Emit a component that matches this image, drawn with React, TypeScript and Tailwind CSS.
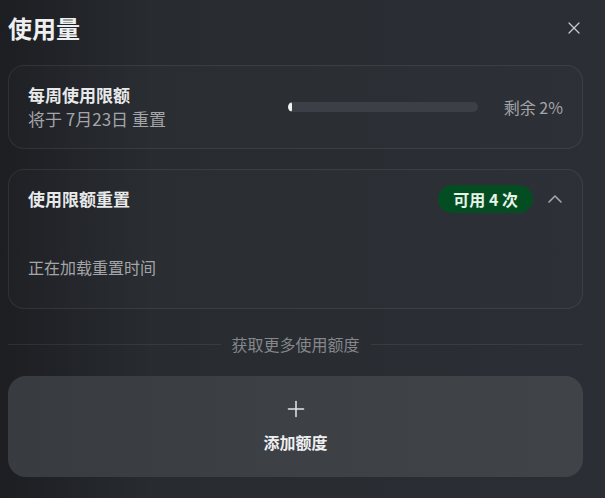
import { ChevronUp, Plus, X } from "lucide-react"

const font = { fontFamily: "'Noto Sans CJK SC', 'Noto Sans', sans-serif" }

function WeeklyLimit() {
  const remaining = 2

  return (
    <div className="flex items-center justify-between rounded-2xl border border-white/[0.07] bg-white/[0.012] pl-[19px] pr-[19px] pt-[17px] pb-[17px]">
      <div className="flex flex-col">
        <span className="text-[17px] leading-6 font-bold text-[#e8e9ea]">每周使用限额</span>
        <span className="text-[17px] leading-6 text-[#a3a5a8]">将于 7月23日 重置</span>
      </div>
      <div className="flex items-center gap-[26px]">
        <div className="h-[10px] w-[190px] rounded-full bg-[#3c3f45] overflow-hidden">
          <div className="h-full rounded-full bg-[#f2f2f2]" style={{ width: `${remaining}%` }} />
        </div>
        <span className="text-[16px] leading-6 text-[#a3a5a8]">剩余 {remaining}%</span>
      </div>
    </div>
  )
}

function LimitReset() {
  return (
    <div className="mt-[20px] rounded-2xl border border-white/[0.07] bg-white/[0.012] pl-[19px] pr-[15px] pt-[15px] pb-[29px]">
      <div className="flex items-center justify-between h-7">
        <span className="text-[17px] leading-6 font-bold text-[#e8e9ea]">使用限额重置</span>
        <div className="flex items-center gap-[10px]">
          <span className="h-7 flex items-center rounded-full bg-[#044d22] px-[15px] text-[16px] font-bold text-[#e6f5e8]">
            可用 4 次
          </span>
          <ChevronUp size={24} strokeWidth={1.6} className="text-[#a6a8ab]" />
        </div>
      </div>
      <p className="mt-[42px] text-[16px] leading-6 text-[#a3a5a8]">正在加载重置时间</p>
    </div>
  )
}

export default function App() {
  return (
    <div
      className="w-[605px] h-[498px] overflow-hidden bg-linear-to-r from-[#1c1e22] via-[#282b30] via-25% to-[#2b2e34] pl-2 pr-[22px]"
      style={font}
    >
      {/* Header */}
      <div className="flex items-center justify-between pt-3 h-11">
        <h1 className="text-[24px] leading-8 font-bold text-[#eeeff0]">使用量</h1>
        <button className="-mr-px text-[#c9cacc]">
          <X size={20} strokeWidth={1.5} />
        </button>
      </div>

      <div className="mt-[21px]">
        <WeeklyLimit />
        <LimitReset />
      </div>

      {/* Divider */}
      <div className="mt-[23px] flex items-center gap-[11px]">
        <div className="h-px flex-1 bg-white/[0.07]" />
        <span className="text-[16px] leading-6 text-[#85878b]">获取更多使用额度</span>
        <div className="h-px flex-1 bg-white/[0.07]" />
      </div>

      {/* Add quota */}
      <button className="mt-[20px] w-full flex flex-col items-center rounded-[18px] bg-linear-to-r from-[#383b40] via-[#3d4045] to-[#404348] pt-5 pb-[23px]">
        <Plus size={26} strokeWidth={1.4} className="text-[#e4e5e6]" />
        <span className="mt-2 text-[16px] leading-6 font-bold text-[#eeeff0]">添加额度</span>
      </button>
    </div>
  )
}
